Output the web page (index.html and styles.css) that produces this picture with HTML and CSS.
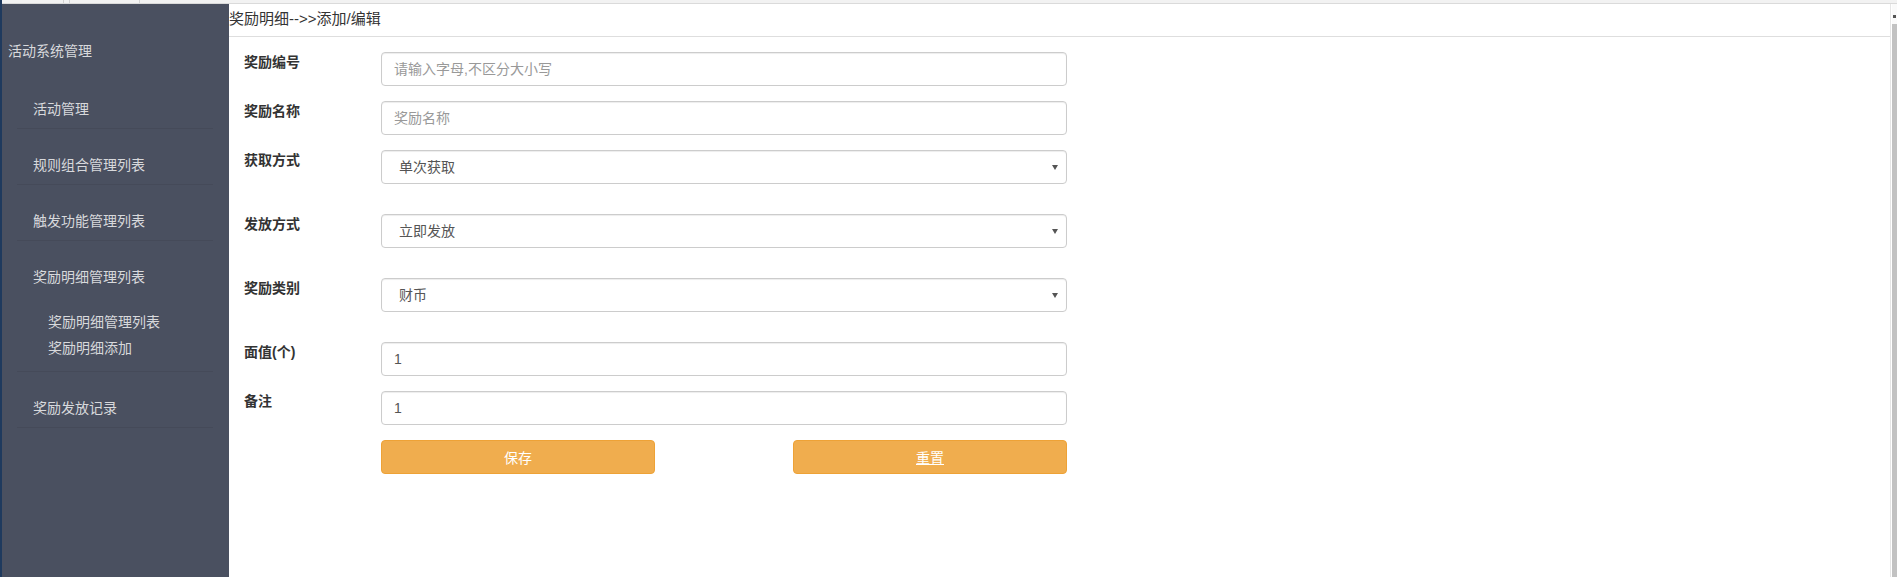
FILE: index.html
```html
<!DOCTYPE html>
<html lang="zh-CN">
<head>
<meta charset="utf-8">
<title>奖励明细-添加/编辑</title>
<link rel="stylesheet" href="styles.css">
</head>
<body>
<div class="frame">
  <div class="edge"></div>
  <div class="window">
    <div class="topbar">
      <span class="tab tab-a"></span>
      <span class="tab tab-b"></span>
      <span class="tab tab-c"></span>
    </div>
    <div class="app">
      <aside class="sidebar">
        <div class="side-title">活动系统管理</div>
        <ul class="nav">
          <li class="nav-item"><span class="nav-text">活动管理</span></li>
          <li class="nav-item"><span class="nav-text">规则组合管理列表</span></li>
          <li class="nav-item"><span class="nav-text">触发功能管理列表</span></li>
          <li class="nav-item">
            <span class="nav-text">奖励明细管理列表</span>
            <ul class="sub">
              <li class="sub-item">奖励明细管理列表</li>
              <li class="sub-item">奖励明细添加</li>
            </ul>
          </li>
          <li class="nav-item"><span class="nav-text">奖励发放记录</span></li>
        </ul>
      </aside>
      <main class="main">
        <div class="crumb">奖励明细--&gt;&gt;添加/编辑</div>
        <form class="form">
          <div class="row">
            <label class="label">奖励编号</label>
            <input class="control" type="text" placeholder="请输入字母,不区分大小写">
          </div>
          <div class="row">
            <label class="label">奖励名称</label>
            <input class="control" type="text" placeholder="奖励名称">
          </div>
          <div class="row row-select">
            <label class="label">获取方式</label>
            <div class="select-wrap">
              <select class="control select"><option>单次获取</option></select>
            </div>
          </div>
          <div class="row row-select">
            <label class="label">发放方式</label>
            <div class="select-wrap">
              <select class="control select"><option>立即发放</option></select>
            </div>
          </div>
          <div class="row row-select">
            <label class="label">奖励类别</label>
            <div class="select-wrap">
              <select class="control select"><option>财币</option></select>
            </div>
          </div>
          <div class="row">
            <label class="label">面值(个)</label>
            <input class="control" type="text" value="1">
          </div>
          <div class="row">
            <label class="label">备注</label>
            <input class="control" type="text" value="1">
          </div>
          <div class="row">
            <span class="label"></span>
            <div class="actions">
              <button type="button" class="btn">保存</button>
              <button type="button" class="btn btn-reset"><span class="u">重置</span></button>
            </div>
          </div>
        </form>
      </main>
      <div class="scroll">
        <div class="scroll-top"><span class="scroll-mark"></span></div>
        <div class="scroll-track"></div>
      </div>
    </div>
  </div>
</div>
</body>
</html>
```

FILE: styles.css
```css
* { box-sizing: border-box; }

html, body {
  margin: 0;
  padding: 0;
  height: 100%;
  overflow: hidden;
  background: #ffffff;
  font-family: "Liberation Sans", "Noto Sans CJK SC", sans-serif;
  font-size: 14px;
  color: #333;
}

.frame {
  display: flex;
  height: 100vh;
}

.edge {
  width: 2px;
  flex-shrink: 0;
  background: #1f3a5e;
}

.window {
  flex: 1;
  display: flex;
  flex-direction: column;
  min-width: 0;
}

.topbar {
  height: 4px;
  flex-shrink: 0;
  display: flex;
  background: #f2f2f2;
  border-bottom: 1px solid #dadada;
}

.tab {
  height: 3px;
  border-right: 1px solid #d2d2d2;
}
.tab-a { width: 62px; }
.tab-b { width: 6px; }
.tab-c { width: 70px; }

.app {
  flex: 1;
  display: flex;
  min-height: 0;
}

/* Sidebar */
.sidebar {
  width: 227px;
  flex-shrink: 0;
  background: #4a5060;
  color: #d8d9dc;
}

.side-title {
  padding: 37px 0 0 6px;
  line-height: 20px;
  font-size: 14px;
}

.nav {
  list-style: none;
  margin: 12px 16px 0 15px;
  padding: 0;
}

.nav-item {
  padding: 27px 0 10px 16px;
  border-bottom: 1px solid #454a59;
  line-height: 18px;
}

.nav-text {
  display: block;
  line-height: 18px;
}

.sub {
  list-style: none;
  margin: 23px 0 0 0;
  padding: 0 0 0 15px;
}

.sub-item {
  line-height: 26px;
}

/* Main */
.main {
  flex: 1;
  min-width: 0;
  border-right: 1px solid #e6e6e6;
  margin-right: 1px;
}

.crumb {
  line-height: 30px;
  padding-bottom: 2px;
  font-size: 15px;
  color: #333;
  border-bottom: 1px solid #dedede;
}

.form {
  padding: 15px 0 0 15px;
}

.row {
  display: flex;
  align-items: flex-start;
  margin-bottom: 15px;
}

.row-select {
  margin-bottom: 30px;
}

.label {
  width: 137px;
  flex-shrink: 0;
  line-height: 20px;
  font-weight: 700;
  color: #333;
}

.control {
  width: 686px;
  height: 34px;
  padding: 6px 12px;
  border: 1px solid #cccccc;
  border-radius: 4px;
  box-shadow: inset 0 1px 1px rgba(0, 0, 0, 0.075);
  font-family: "Liberation Sans", "Noto Sans CJK SC", sans-serif;
  font-size: 14px;
  color: #555;
  background: #fff;
  outline: none;
}

.control::placeholder {
  color: #999;
}

.select-wrap {
  position: relative;
  width: 686px;
}

.select {
  display: block;
  -webkit-appearance: none;
  appearance: none;
  padding-left: 17px;
}

.select-wrap::after {
  content: "";
  position: absolute;
  right: 9px;
  top: 15px;
  border-left: 3px solid transparent;
  border-right: 3px solid transparent;
  border-top: 5px solid #555;
}

.actions {
  width: 686px;
  display: flex;
  justify-content: space-between;
}

.btn {
  width: 274px;
  height: 34px;
  padding: 0;
  border: 1px solid #eea236;
  border-radius: 4px;
  background: #f0ad4e;
  color: #fff;
  font-family: "Liberation Sans", "Noto Sans CJK SC", sans-serif;
  font-size: 14px;
  cursor: pointer;
}

.btn-reset .u {
  text-decoration: underline;
}

/* right-edge scrollbar remnant */
.scroll {
  width: 5px;
  flex-shrink: 0;
  display: flex;
  flex-direction: column;
}

.scroll-top {
  height: 20px;
  background: #fafafa;
  display: flex;
  justify-content: center;
  padding-top: 11px;
}

.scroll-mark {
  width: 3px;
  height: 3px;
  background: #555;
}

.scroll-track {
  flex: 1;
  background: #c2c2c2;
}
```
